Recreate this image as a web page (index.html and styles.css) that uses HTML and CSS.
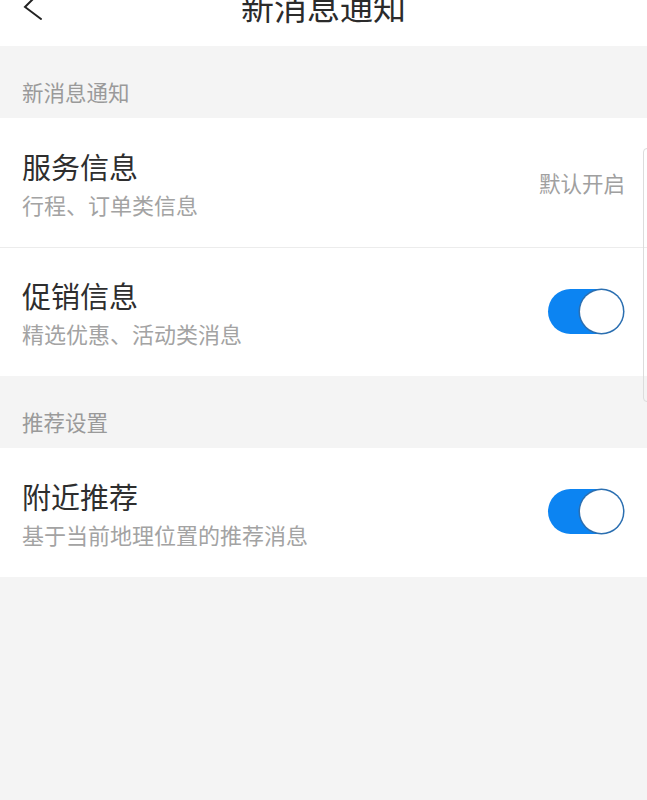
FILE: index.html
```html
<!DOCTYPE html>
<html lang="zh-CN">
<head>
<meta charset="utf-8">
<title>新消息通知</title>
<link rel="stylesheet" href="styles.css">
</head>
<body>
<div class="page">
  <header class="topbar">
    <svg class="back" width="22" height="32" viewBox="0 0 22 32" aria-hidden="true">
      <path d="M18 0 L2 16 L18 28" fill="none" stroke="#222" stroke-width="2" stroke-linecap="round" stroke-linejoin="miter"/>
    </svg>
    <h1 class="title">新消息通知</h1>
    <span class="spacer"></span>
  </header>

  <div class="section-label">新消息通知</div>
  <section class="card">
    <div class="row">
      <div class="texts">
        <div class="row-title">服务信息</div>
        <div class="row-sub">行程、订单类信息</div>
      </div>
      <div class="row-value">默认开启</div>
    </div>
    <div class="row">
      <div class="texts">
        <div class="row-title">促销信息</div>
        <div class="row-sub">精选优惠、活动类消息</div>
      </div>
      <div class="switch on"><span class="knob"></span></div>
    </div>
  </section>

  <div class="section-label">推荐设置</div>
  <section class="card">
    <div class="row">
      <div class="texts">
        <div class="row-title">附近推荐</div>
        <div class="row-sub">基于当前地理位置的推荐消息</div>
      </div>
      <div class="switch on"><span class="knob"></span></div>
    </div>
  </section>

  <div class="scrollbar"></div>
</div>
</body>
</html>
```

FILE: styles.css
```css
* { box-sizing: border-box; }
html, body {
  margin: 0;
  padding: 0;
  background: #f4f4f4;
}
body {
  font-family: "Noto Sans CJK SC", "Noto Sans", "Liberation Sans", sans-serif;
  color: #333;
}
.page {
  position: relative;
  width: 647px;
  min-height: 800px;
  background: #f4f4f4;
  overflow: hidden;
}
.topbar {
  height: 46px;
  background: #fff;
  display: grid;
  grid-template-columns: 1fr auto 1fr;
  align-items: start;
  overflow: hidden;
}
.back {
  display: block;
  margin-left: 23px;
  margin-top: -9px;
}
.title {
  margin: -16px 0 0 0;
  font-size: 33px;
  line-height: 44px;
  font-weight: 400;
  color: #2b2b2b;
  letter-spacing: 0;
}
.section-label {
  height: 72px;
  padding: 34px 22px 0;
  font-size: 21.5px;
  line-height: 24px;
  color: #9a9a9a;
}
.card {
  background: #fff;
}
.row {
  height: 129px;
  display: flex;
  align-items: center;
  justify-content: space-between;
  padding: 0 23px 0 22px;
}
.row + .row {
  border-top: 1px solid #ececec;
}
.texts {
  display: flex;
  flex-direction: column;
  gap: 6px;
  margin-top: 2px;
}
.row-title {
  font-size: 29px;
  line-height: 34px;
  color: #2e2e2e;
}
.row-sub {
  font-size: 22px;
  line-height: 30px;
  color: #a3a3a3;
}
.row-value {
  font-size: 21.5px;
  line-height: 30px;
  color: #a0a0a0;
  margin-right: -1px;
}
.switch {
  width: 76px;
  height: 45px;
  border-radius: 23px;
  background: #0c84f2;
  position: relative;
  margin-top: -2px;
}
.switch .knob {
  position: absolute;
  top: 1px;
  right: 1px;
  width: 43px;
  height: 43px;
  border-radius: 50%;
  background: #fff;
  box-shadow: 0 0 0 1.5px #2c6fb0;
}
.scrollbar {
  position: absolute;
  left: 643px;
  top: 148px;
  width: 8px;
  height: 254px;
  border: 1px solid #dcdcdc;
  border-radius: 5px;
  background: transparent;
}
```
